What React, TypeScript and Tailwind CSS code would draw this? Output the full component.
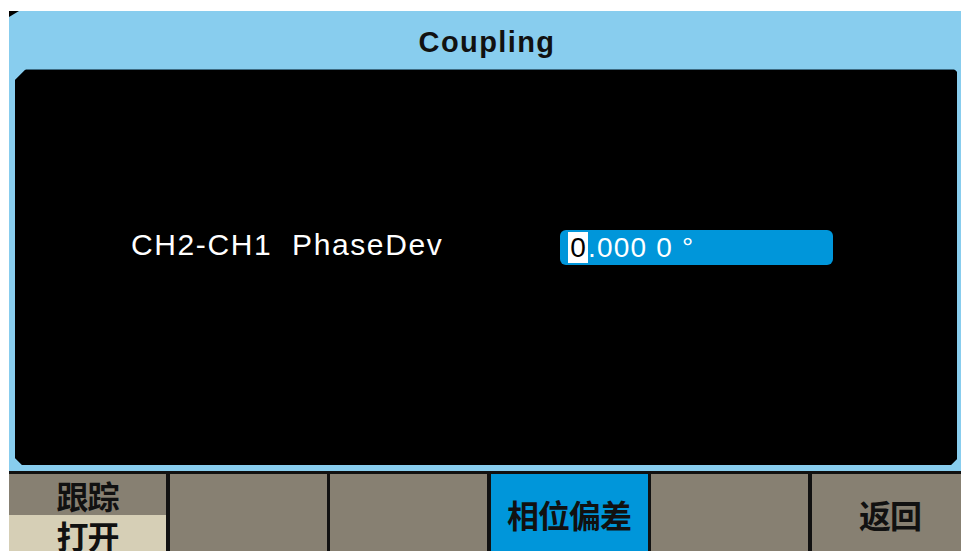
import React from "react";

const sans = { fontFamily: '"Liberation Sans", Arial, sans-serif' };
const cjk = { fontFamily: '"Noto Sans CJK SC", "Noto Sans", sans-serif' };

function Btn({ children, active }: { children?: React.ReactNode; active?: boolean }) {
  return (
    <div
      className={`w-[157px] shrink-0 h-full flex items-center justify-center ${active ? "bg-[#0096da]" : "bg-[#878072]"}`}
    >
      {children ? (
        <span className="text-[32px] font-bold tracking-[-1px] text-[#111] leading-none" style={cjk}>
          {children}
        </span>
      ) : null}
    </div>
  );
}

export default function App() {
  return (
    <div className="w-[961px] h-[551px] overflow-hidden bg-white pt-[11px] pl-[9px]">
      <div className="relative w-[952px] bg-[#88cdee] flex flex-col">
        <div className="absolute left-0 top-0 w-[10px] h-[6px] bg-black [clip-path:polygon(0_0,100%_0,0_100%)]" />
        <div className="h-[58px] flex items-center justify-center pt-[5px]">
          <span className="text-[29px] font-bold tracking-[1.4px] text-[#111] leading-none pl-[4px]" style={sans}>
            Coupling
          </span>
        </div>
        <div className="ml-[6px] w-[942px] h-[396px] bg-[#3f6b82] pt-[1px] [clip-path:polygon(11px_0,calc(100%-3px)_0,100%_3px,100%_calc(100%-6px),calc(100%-6px)_100%,7px_100%,0_calc(100%-7px),0_11px)]">
          <div className="w-full h-full bg-black pt-[160px] pl-[116px] flex items-start">
            <div className="w-[429px] h-[35px] text-white text-[30px] leading-[30px] tracking-[1.6px] whitespace-pre" style={sans}>
              {"CH2-CH1  PhaseDev"}
            </div>
            <div className="w-[273px] h-[35px] bg-[#0096da] rounded-[6px] flex items-center pl-[8px]" style={sans}>
              <span className="w-[20px] h-[31px] bg-white text-black text-[28px] leading-[31px] flex justify-center">0</span>
              <span className="h-[31px] text-white text-[28px] leading-[31px] tracking-[1.2px] whitespace-pre">{".000 0 °"}</span>
            </div>
          </div>
        </div>
        <div className="h-[6px]" />
      </div>
      <div className="w-[952px] h-[3px] bg-[#111]" />
      <div className="w-[960px] h-[80px] flex gap-[3.5px] bg-[#111]">
        <div className="w-[157px] shrink-0 h-full flex flex-col">
          <div className="h-[41px] bg-[#878072] flex items-center justify-center">
            <span className="text-[32px] font-bold tracking-[-1px] text-[#111] leading-none" style={cjk}>跟踪</span>
          </div>
          <div className="flex-1 bg-[#d6cfb6] flex items-center justify-center">
            <span className="text-[32px] font-bold tracking-[-1px] text-[#111] leading-none" style={cjk}>打开</span>
          </div>
        </div>
        <Btn />
        <Btn />
        <Btn active>相位偏差</Btn>
        <Btn />
        <Btn>返回</Btn>
      </div>
    </div>
  );
}
